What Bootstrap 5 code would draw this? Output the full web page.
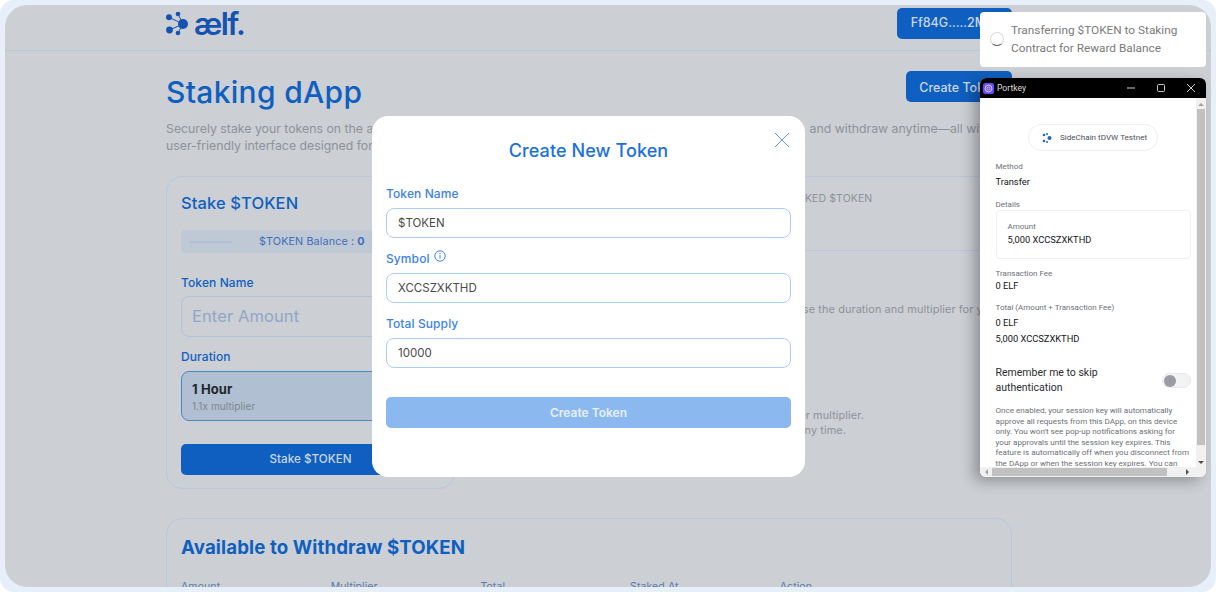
<!DOCTYPE html>
<html lang="en">
<head>
    <meta charset="UTF-8">
    <meta name="viewport" content="width=device-width, initial-scale=1.0">
    <title>Staking dApp</title>
    <link href="https://cdn.jsdelivr.net/npm/bootstrap@5.3.0/dist/css/bootstrap.min.css" rel="stylesheet">
    <style>
        html { height: 100%; background: #fff; }
        body { height: 100%; overflow: hidden; background: #e7eff9; border-radius: 14px; padding: 5px; font-family: "Inter", "Open Sans", sans-serif; letter-spacing: .1px; }
        .frame { position: relative; height: 582px; width: 1206px; background: #ccCfd4; border-radius: 22px; overflow: hidden; }
        .top-bar { height: 46px; border-bottom: 1px solid #b9c8da; }
        .wrap { width: 846px; margin-left: 161px; }
        .wallet-btn, .create-btn, .stake-btn { background: #0f5fc0; color: #c9d6e8; border-radius: 5px; font-weight: 500; font-size: 12.5px; border: 0; padding: 0; }
        .wallet-btn { width: 115px; height: 31px; margin-top: 3px; }
        .create-btn { width: 106px; height: 31px; padding-top: 3px; }
        .page-title { color: #0f5fc0; font-size: 30px; font-weight: 500; margin: 0; line-height: 42px; letter-spacing: .3px; }
        .sub-text { color: #8e9299; font-size: 12.3px; line-height: 17px; margin: 7px 0 0; height: 34px; white-space: nowrap; letter-spacing: 0; }
        .sub-mid { display: inline-block; width: 436px; overflow: hidden; vertical-align: bottom; }
        .head-row { padding-top: 20px; }
        .panels-row { margin-top: 22px; }
        .panel { border: 1px solid #b7c8de; border-radius: 16px; }
        .stake-panel { width: 289px; height: 313px; padding: 14px 14px; flex: none; }
        .panel-title { color: #0f5fc0; font-size: 16.5px; font-weight: 500; line-height: 24px; margin: 0; }
        .balance-box { background: #bfc9d6; border-radius: 4px; height: 23px; margin-top: 15px; color: #3f6fb4; font-size: 10.8px; padding-left: 8px; padding-top: 1px; gap: 27px; }
        .balance-line { width: 43px; height: 2px; background: #b1c0d4; }
        .field-label { color: #0f5fc0; font-size: 12px; font-weight: 500; line-height: 16px; margin: 0; }
        .label-one { margin-top: 22px; }
        .label-two { margin-top: 12px; }
        .amount-box { height: 41px; border: 1px solid #b0c2da; border-radius: 8px; color: #8fa6c8; font-size: 16.5px; padding: 0 10px; margin-top: 5px; }
        .duration-box { height: 50px; background: #b0bfd2; border: 1px solid #4d85cb; border-radius: 8px; margin-top: 6px; padding: 8px 10px; }
        .duration-name { color: #24272b; font-size: 13px; font-weight: 700; line-height: 18px; }
        .duration-note { color: #7f858d; font-size: 10px; line-height: 14px; margin-top: 1px; }
        .stake-btn { height: 31px; width: 100%; margin-top: 23px; font-size: 11.7px; }
        .side-col { flex: 1; min-width: 0; margin-left: 15px; white-space: nowrap; }
        .stats-panel { height: 75px; padding: 14px 0 0 277px; color: #8e9299; font-size: 10.5px; }
        .side-text { color: #8e9299; font-size: 10.9px; line-height: 15px; }
        .side-one { margin-top: 51px; padding-left: 305px; }
        .side-two { margin-top: 91px; padding-right: 148px; }
        .side-two span { padding-right: 18px; }
        .withdraw-panel { margin-top: 29px; height: 120px; padding: 17px 14px; }
        .withdraw-title { color: #0f5fc0; font-size: 18.7px; font-weight: 700; line-height: 24px; margin: 0; }
        .col-heads { margin-top: 19px; color: #5a7bab; font-size: 10.5px; }
        .col-heads span { width: 149.7px; }

        /* overlays */
        .token-modal { position: absolute; left: 367px; top: 111px; width: 433px; height: 361px; background: #fff; border-radius: 16px; padding: 0 14px; }
        .modal-head { color: #1a6fe0; font-size: 18px; font-weight: 500; text-align: center; margin: 0; padding-top: 23px; line-height: 24px; }
        .close-x { position: absolute; right: 15px; top: 16px; }
        .m-fields { margin-top: 22px; }
        .m-label { color: #3b82ee; font-size: 12px; font-weight: 500; line-height: 18px; height: 16px; margin: 0 0 7px; gap: 4px; }
        .m-input { height: 30px; border: 1px solid #a9cdf8; border-radius: 8px; color: #4a4a4a; font-size: 11.5px; padding: 2px 11px 0; margin-bottom: 12px; letter-spacing: 0; }
        .m-btn { height: 31px; background: #8ab8ef; color: #e6f0fd; font-size: 12px; font-weight: 600; border: 0; border-radius: 5px; width: 100%; margin-top: 17px; padding: 0; }

        .toast-note { position: absolute; left: 975px; top: 7px; width: 226px; height: 55px; background: #fff; border-radius: 4px; color: #7a7a7a; font-family: "Roboto", sans-serif; font-size: 11.8px; line-height: 18px; padding: 9px 12px 0 31px; letter-spacing: 0; }
        .spin-ring { position: absolute; left: 10px; top: 20px; width: 14px; height: 14px; border-radius: 50%; border: 1px solid #d8d8d8; border-bottom-color: #555; }

        .pk-window { position: absolute; left: 975px; top: 73px; width: 226px; height: 399px; background: #fff; border-radius: 6px; overflow: hidden; box-shadow: -6px 4px 14px rgba(0,0,0,.3); font-family: "Roboto", sans-serif; letter-spacing: 0; }
        .pk-title { height: 20px; background: #000; color: #ddd; font-size: 8.6px; padding-left: 3px; }
        .pk-logo { margin-right: 3px; }
        .pk-ctrls { width: 68px; margin-right: 11px; }
        .pk-body { padding: 26px 15px 0 15.5px; width: 226px; height: 369px; overflow: hidden; position: relative; }
        .chain-pill { width: 130px; height: 27px; border: 1px solid #eceef1; border-radius: 14px; margin-left: 32.5px; color: #4a4f57; font-size: 8.1px; gap: 7px; padding-left: 3px; }
        .pk-key { color: #6c7078; font-size: 8px; line-height: 11px; }
        .pk-val { color: #111418; font-size: 9.3px; line-height: 13px; }
        .pk-box { height: 49px; border: 1px solid #eef0f3; border-radius: 4px; padding: 10px 11px; }
        .skip-row { font-size: 10.5px; color: #2a2d31; line-height: 14.5px; margin-top: 21px; }
        .pk-switch { width: 29px; height: 15px; border-radius: 8px; background: #f2f3f4; border: 1px solid #e8e8ea; padding: 1px; }
        .pk-knob { width: 12px; height: 12px; border-radius: 50%; background: #9a9ca2; }
        .pk-small { color: #6b6f76; font-size: 8.1px; line-height: 10.5px; margin: 10px 0 0; white-space: nowrap; }
        .gap-9 { margin-top: 9px; }
        .gap-10 { margin-top: 10px; }
        .gap-3 { margin-top: 3px; }
        .gap-1 { margin-top: 1px; }
        .bar-v { position: absolute; right: 0; top: 20px; width: 10px; height: 369px; background: #f1f1f1; }
        .bar-v i { position: absolute; left: 1px; top: 11px; width: 8px; height: 336px; background: #c1c1c1; }
        .bar-h { position: absolute; left: 0; bottom: 0; width: 226px; height: 10px; background: #f1f1f1; }
        .bar-h i { position: absolute; left: 12px; top: 1px; width: 175px; height: 8px; background: #c1c1c1; }
        .arrow-up, .arrow-down, .arrow-left, .arrow-right { position: absolute; width: 0; height: 0; border: 3px solid transparent; }
        .arrow-up { left: 2px; top: 2px; border-bottom-color: #a3a3a3; }
        .arrow-down { left: 2px; bottom: 0; border-top-color: #505050; }
        .arrow-left { left: 2px; top: 2px; border-right-color: #a3a3a3; }
        .arrow-right { left: 206px; top: 2px; border-left-color: #505050; }
    </style>
</head>
<body>
    <div class="frame">
        <div class="top-bar">
            <div class="wrap d-flex justify-content-between">
                <svg width="80" height="30" viewBox="0 0 80 30" class="mt-1">
                    <path d="M3 8.3 L17 15 M3.5 21 L17 15 M12 5 L17 15 M12 24 L17 15" stroke="#1553b0" stroke-width="1"/>
                    <g fill="#1553b0">
                        <circle cx="12" cy="5" r="2.3"/><circle cx="3" cy="8.3" r="3"/><circle cx="17" cy="15" r="5"/><circle cx="3.5" cy="21" r="3.4"/><circle cx="12" cy="24" r="2.3"/>
                    </g>
                    <text x="28" y="26" font-family="Inter, sans-serif" font-size="31" font-weight="600" fill="#1553b0" letter-spacing="-1.6">ælf.</text>
                </svg>
                <button class="wallet-btn">Ff84G.....2M6t</button>
            </div>
        </div>
        <div class="wrap">
            <div class="head-row d-flex justify-content-between align-items-start">
                <h1 class="page-title">Staking dApp</h1>
                <button class="create-btn">Create Token</button>
            </div>
            <p class="sub-text">Securely stake your tokens on the <span class="sub-mid">aelf blockchain, earn rewards over time</span>, and withdraw anytime—all with a<br>user-friendly interface designed for everyone.</p>
            <div class="d-flex panels-row">
                <div class="panel stake-panel">
                    <h2 class="panel-title">Stake $TOKEN</h2>
                    <div class="balance-box d-flex align-items-center"><span class="balance-line"></span><span>$TOKEN Balance : <b>0</b></span></div>
                    <p class="field-label label-one">Token Name</p>
                    <div class="amount-box d-flex align-items-center">Enter Amount</div>
                    <p class="field-label label-two">Duration</p>
                    <div class="duration-box">
                        <div class="duration-name">1 Hour</div>
                        <div class="duration-note">1.1x multiplier</div>
                    </div>
                    <button class="stake-btn">Stake $TOKEN</button>
                </div>
                <div class="side-col">
                    <div class="panel stats-panel">TOTAL STAKED $TOKEN</div>
                    <div class="side-text side-one">Choose the duration and multiplier for your stake</div>
                    <div class="side-text side-two text-end">Longer locks get a higher multiplier.<br><span>Withdraw at any time.</span></div>
                </div>
            </div>
            <div class="panel withdraw-panel">
                <h2 class="withdraw-title">Available to Withdraw $TOKEN</h2>
                <div class="col-heads d-flex"><span>Amount</span><span>Multiplier</span><span>Total</span><span>Staked At</span><span>Action</span></div>
            </div>
        </div>

        <div class="token-modal">
            <h5 class="modal-head">Create New Token</h5>
            <svg class="close-x" width="16" height="16" viewBox="0 0 16 16"><path d="M1 1 L15 15 M15 1 L1 15" stroke="#5b9bec" stroke-width="1"/></svg>
            <div class="m-fields">
                <p class="m-label">Token Name</p>
                <div class="m-input d-flex align-items-center">$TOKEN</div>
                <p class="m-label d-flex align-items-start">Symbol
                    <svg width="12" height="12" viewBox="0 0 12 12"><circle cx="6" cy="6" r="5.2" fill="none" stroke="#3b82ee"/><path d="M6 5.2v3.4M6 3v1.2" stroke="#3b82ee"/></svg>
                </p>
                <div class="m-input d-flex align-items-center">XCCSZXKTHD</div>
                <p class="m-label">Total Supply</p>
                <div class="m-input d-flex align-items-center">10000</div>
                <button class="m-btn">Create Token</button>
            </div>
        </div>

        <div class="toast-note">
            <span class="spin-ring"></span>
            Transferring $TOKEN to Staking Contract for Reward Balance
        </div>

        <div class="pk-window">
            <div class="pk-title d-flex align-items-center">
                <svg class="pk-logo" width="11" height="11" viewBox="0 0 11 11"><rect width="11" height="11" rx="2.5" fill="#6a4cf5"/><circle cx="5.5" cy="5.5" r="3.4" fill="none" stroke="#d9d0ff" stroke-width="1"/><circle cx="5.5" cy="5.5" r="1.4" fill="none" stroke="#d9d0ff" stroke-width=".8"/></svg>Portkey
                <div class="pk-ctrls d-flex justify-content-between align-items-center ms-auto">
                    <svg width="8" height="8" viewBox="0 0 8 8"><path d="M0 4h8" stroke="#ccc"/></svg>
                    <svg width="8" height="8" viewBox="0 0 8 8"><rect x=".5" y=".5" width="7" height="7" rx="1" fill="none" stroke="#ccc"/></svg>
                    <svg width="8" height="8" viewBox="0 0 8 8"><path d="M0 0l8 8M8 0l-8 8" stroke="#ccc"/></svg>
                </div>
            </div>
            <div class="pk-body">
                <div class="chain-pill d-flex align-items-center justify-content-center">
                    <svg width="11" height="10" viewBox="0 0 11 10"><g fill="#2464c8"><circle cx="2" cy="2" r="1.3"/><circle cx="2" cy="8" r="1.3"/><circle cx="5" cy="1" r="1"/><circle cx="5" cy="9" r="1"/><circle cx="7.5" cy="5" r="2"/></g></svg>
                    SideChain tDVW Testnet
                </div>
                <div class="pk-key gap-10">Method</div>
                <div class="pk-val gap-3">Transfer</div>
                <div class="pk-key" style="margin-top:11px">Details</div>
                <div class="pk-box">
                    <div class="pk-key">Amount</div>
                    <div class="pk-val gap-1">5,000 XCCSZXKTHD</div>
                </div>
                <div class="pk-key gap-9">Transaction Fee</div>
                <div class="pk-val">0 ELF</div>
                <div class="pk-key gap-10">Total (Amount + Transaction Fee)</div>
                <div class="pk-val gap-3">0 ELF</div>
                <div class="pk-val gap-3">5,000 XCCSZXKTHD</div>
                <div class="skip-row d-flex align-items-center justify-content-between">
                    <span>Remember me to skip<br>authentication</span>
                    <span class="pk-switch"><span class="pk-knob d-block"></span></span>
                </div>
                <p class="pk-small">Once enabled, your session key will automatically<br>approve all requests from this DApp, on this device<br>only. You won't see pop-up notifications asking for<br>your approvals until the session key expires. This<br>feature is automatically off when you disconnect from<br>the DApp or when the session key expires. You can</p>
            </div>
            <div class="bar-v"><span class="arrow-up"></span><i></i><span class="arrow-down"></span></div>
            <div class="bar-h"><span class="arrow-left"></span><i></i><span class="arrow-right"></span></div>
        </div>
    </div>
    <script src="https://cdn.jsdelivr.net/npm/bootstrap@5.3.0/dist/js/bootstrap.bundle.min.js"></script>
</body>
</html>
